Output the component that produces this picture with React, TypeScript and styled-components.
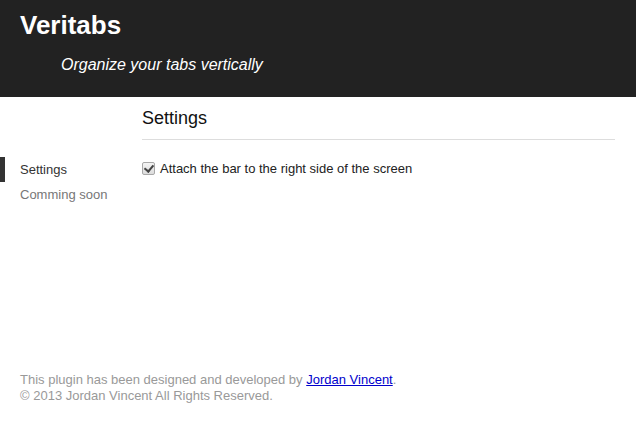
import React from 'react';
import styled, { createGlobalStyle } from 'styled-components';

const GlobalStyle = createGlobalStyle`
  html, body {
    margin: 0;
    padding: 0;
    background: #fff;
    font-family: "Liberation Sans", Arial, sans-serif;
  }
`;

function App() {
  return (
    <Page>
      <GlobalStyle />
      <Header>
        <Title>Veritabs</Title>
        <Tagline>Organize your tabs vertically</Tagline>
      </Header>
      <Main>
        <Nav>
          <NavItem active>Settings</NavItem>
          <NavItem>Comming soon</NavItem>
        </Nav>
        <Content>
          <Heading>Settings</Heading>
          <Option>
            <Checkbox type="checkbox" defaultChecked />
            Attach the bar to the right side of the screen
          </Option>
        </Content>
      </Main>
      <Footer>
        <div>
          This plugin has been designed and developed by{' '}
          <FooterLink href="#">Jordan Vincent</FooterLink>.
        </div>
        <div>© 2013 Jordan Vincent All Rights Reserved.</div>
      </Footer>
    </Page>
  );
}

const Page = styled.div`
  min-height: 100vh;
  display: flex;
  flex-direction: column;
`;

const Header = styled.header`
  background: #222;
  color: #fff;
  height: 97px;
  box-sizing: border-box;
  padding: 10px 20px 0;
`;

const Title = styled.h1`
  margin: 0;
  font-size: 26px;
  line-height: 30px;
  font-weight: bold;
`;

const Tagline = styled.div`
  margin: 15px 0 0 41px;
  font-size: 16px;
  font-style: italic;
  line-height: 20px;
`;

const Main = styled.div`
  display: flex;
`;

const Nav = styled.nav`
  width: 142px;
  flex-shrink: 0;
  padding-top: 60px;
`;

const NavItem = styled.div<{ active?: boolean }>`
  font-size: 13px;
  line-height: 25px;
  padding-left: ${(p) => (p.active ? '15px' : '20px')};
  border-left: ${(p) => (p.active ? '5px solid #333' : 'none')};
  color: ${(p) => (p.active ? '#333' : '#777')};
`;

const Content = styled.div`
  flex: 1;
  padding-right: 21px;
`;

const Heading = styled.h2`
  margin: 0;
  padding: 10px 0 10px;
  font-size: 18px;
  line-height: 22px;
  font-weight: normal;
  color: #111;
  border-bottom: 1px solid #ddd;
`;

const Option = styled.label`
  display: flex;
  align-items: center;
  gap: 5px;
  margin-top: 18px;
  height: 20px;
  font-size: 13px;
  color: #222;
`;

const Checkbox = styled.input`
  appearance: none;
  margin: 0;
  width: 13px;
  height: 13px;
  border: 1px solid #a8a8a8;
  border-radius: 2px;
  background: linear-gradient(#f4f4f4, #dcdcdc);
  position: relative;
  box-sizing: border-box;

  &:checked::after {
    content: '';
    position: absolute;
    left: 3px;
    top: 0px;
    width: 4px;
    height: 7px;
    border: solid #444;
    border-width: 0 2px 2px 0;
    transform: rotate(40deg);
  }
`;

const Footer = styled.footer`
  margin-top: auto;
  padding: 0 20px 20px;
  font-size: 13px;
  line-height: 16px;
  color: #999;
`;

const FooterLink = styled.a`
  color: #00c;
  text-decoration: underline;
`;

export default App;
